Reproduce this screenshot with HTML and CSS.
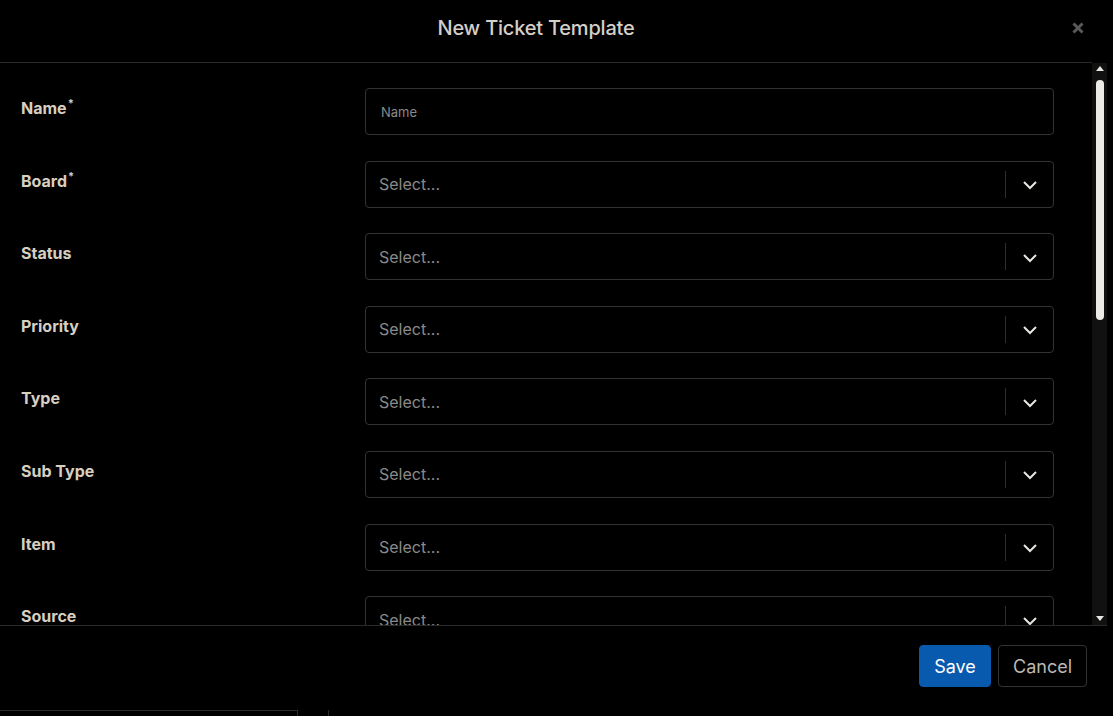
FILE: index.html
```html
<!DOCTYPE html>
<html lang="en">
<head>
    <meta charset="UTF-8">
    <title>New Ticket Template</title>
    <link rel="stylesheet" href="styles.css">
</head>
<body>
    <div class="modal">
        <div class="modal-header">
            <h1>New Ticket Template</h1>
            <span class="close"><svg width="12" height="12" viewBox="0 0 12 12"><path d="M1.5 1.5l9 9M10.5 1.5l-9 9" stroke="#595959" stroke-width="3"/></svg></span>
        </div>
        <div class="modal-body">
            <div class="form">
                <div class="row">
                    <label>Name<sup>*</sup></label>
                    <div class="field"><span class="placeholder small">Name</span></div>
                </div>
                <div class="row">
                    <label>Board<sup>*</sup></label>
                    <div class="field select"><span class="placeholder">Select...</span><span class="sep"></span><span class="chev"><svg width="16" height="10" viewBox="0 0 16 10"><path d="M2 2l6 6 6-6" fill="none" stroke="#e8e6e1" stroke-width="2"/></svg></span></div>
                </div>
                <div class="row">
                    <label>Status</label>
                    <div class="field select"><span class="placeholder">Select...</span><span class="sep"></span><span class="chev"><svg width="16" height="10" viewBox="0 0 16 10"><path d="M2 2l6 6 6-6" fill="none" stroke="#e8e6e1" stroke-width="2"/></svg></span></div>
                </div>
                <div class="row">
                    <label>Priority</label>
                    <div class="field select"><span class="placeholder">Select...</span><span class="sep"></span><span class="chev"><svg width="16" height="10" viewBox="0 0 16 10"><path d="M2 2l6 6 6-6" fill="none" stroke="#e8e6e1" stroke-width="2"/></svg></span></div>
                </div>
                <div class="row">
                    <label>Type</label>
                    <div class="field select"><span class="placeholder">Select...</span><span class="sep"></span><span class="chev"><svg width="16" height="10" viewBox="0 0 16 10"><path d="M2 2l6 6 6-6" fill="none" stroke="#e8e6e1" stroke-width="2"/></svg></span></div>
                </div>
                <div class="row">
                    <label>Sub Type</label>
                    <div class="field select"><span class="placeholder">Select...</span><span class="sep"></span><span class="chev"><svg width="16" height="10" viewBox="0 0 16 10"><path d="M2 2l6 6 6-6" fill="none" stroke="#e8e6e1" stroke-width="2"/></svg></span></div>
                </div>
                <div class="row">
                    <label>Item</label>
                    <div class="field select"><span class="placeholder">Select...</span><span class="sep"></span><span class="chev"><svg width="16" height="10" viewBox="0 0 16 10"><path d="M2 2l6 6 6-6" fill="none" stroke="#e8e6e1" stroke-width="2"/></svg></span></div>
                </div>
                <div class="row">
                    <label>Source</label>
                    <div class="field select"><span class="placeholder">Select...</span><span class="sep"></span><span class="chev"><svg width="16" height="10" viewBox="0 0 16 10"><path d="M2 2l6 6 6-6" fill="none" stroke="#e8e6e1" stroke-width="2"/></svg></span></div>
                </div>
            </div>
            <div class="scrollbar">
                <span class="arrow up"></span>
                <div class="thumb"></div>
                <span class="arrow down"></span>
            </div>
        </div>
        <div class="modal-footer">
            <button type="button" class="btn save">Save</button>
            <button type="button" class="btn cancel">Cancel</button>
        </div>
    </div>
    <div class="backdrop">
        <div class="cell first"></div>
        <div class="cell second"></div>
    </div>
</body>
</html>
```

FILE: styles.css
```css
body {
    margin: 0;
    background: #000;
    font-family: Inter, 'Noto Sans', sans-serif;
    overflow: hidden;
}
.modal {
    width: 1107px;
    height: 710px;
    background: #000;
    display: flex;
    flex-direction: column;
}
.modal-header {
    height: 62px;
    border-bottom: 1px solid #2a2a2a;
    display: flex;
    align-items: center;
    justify-content: center;
    position: relative;
    margin-right: 15px;
    padding-right: 20px;
}
.modal-header h1 {
    margin: 0 0 6px 0;
    font-size: 20px;
    font-weight: 500;
    color: #d4d0c8;
    letter-spacing: -0.2px;
}
.close {
    position: absolute;
    right: 8px;
    top: 22px;
    display: flex;
}
.modal-body {
    height: 562px;
    display: flex;
    border-bottom: 1px solid #2a2a2a;
    overflow: hidden;
}
.form {
    flex: 1;
    padding: 25px 38px 0 21px;
}
.row {
    display: flex;
    margin-bottom: 25.6px;
}
.row label {
    width: 344px;
    padding-top: 10px;
    line-height: 20px;
    font-size: 16px;
    font-weight: 700;
    color: #d7cfc0;
}
.row label sup {
    font-size: 11px;
    line-height: 0;
    vertical-align: 7px;
    margin-left: 1px;
}
.field {
    flex: 1;
    height: 47px;
    box-sizing: border-box;
    border: 1px solid #333;
    border-radius: 4px;
    display: flex;
    align-items: center;
    padding-left: 15px;
}
.placeholder {
    color: #8a8a8a;
    font-size: 16px;
    flex: 1;
}
.placeholder.small {
    font-size: 13px;
}
.select {
    padding-left: 13px;
}
.sep {
    width: 1px;
    height: 27px;
    background: #2e2e2e;
}
.chev {
    width: 47px;
    display: flex;
    justify-content: center;
    padding-top: 2px;
}
.scrollbar {
    width: 15px;
    background: #111;
    display: flex;
    flex-direction: column;
    align-items: center;
}
.arrow {
    width: 0;
    height: 0;
    border-left: 4px solid transparent;
    border-right: 4px solid transparent;
}
.arrow.up {
    margin-top: 3px;
    border-bottom: 5px solid #e8e6e1;
}
.arrow.down {
    margin-top: auto;
    margin-bottom: 4px;
    border-top: 5px solid #e8e6e1;
}
.thumb {
    margin-top: 9px;
    width: 8px;
    height: 240px;
    border-radius: 4px;
    background: #ecebe6;
}
.modal-footer {
    flex: 1;
    display: flex;
    justify-content: flex-end;
    align-items: flex-start;
    gap: 7px;
    padding: 19px 20px 0 0;
}
.btn {
    height: 42px;
    border-radius: 4px;
    font-family: Inter, 'Noto Sans', sans-serif;
    font-size: 18px;
    padding: 0 10px;
    cursor: pointer;
}
.save {
    background: #075aad;
    border: 1px solid #075aad;
    color: #fff;
    width: 72px;
}
.cancel {
    background: #000;
    border: 1px solid #333;
    color: #bdb9b1;
    width: 89px;
}
.backdrop {
    display: flex;
    height: 6px;
}
.cell.first {
    width: 297px;
    border-top: 1px solid #2a2a2a;
    border-right: 1px solid #2a2a2a;
}
.cell.second {
    width: 30px;
    border-right: 1px solid #2a2a2a;
}
```
